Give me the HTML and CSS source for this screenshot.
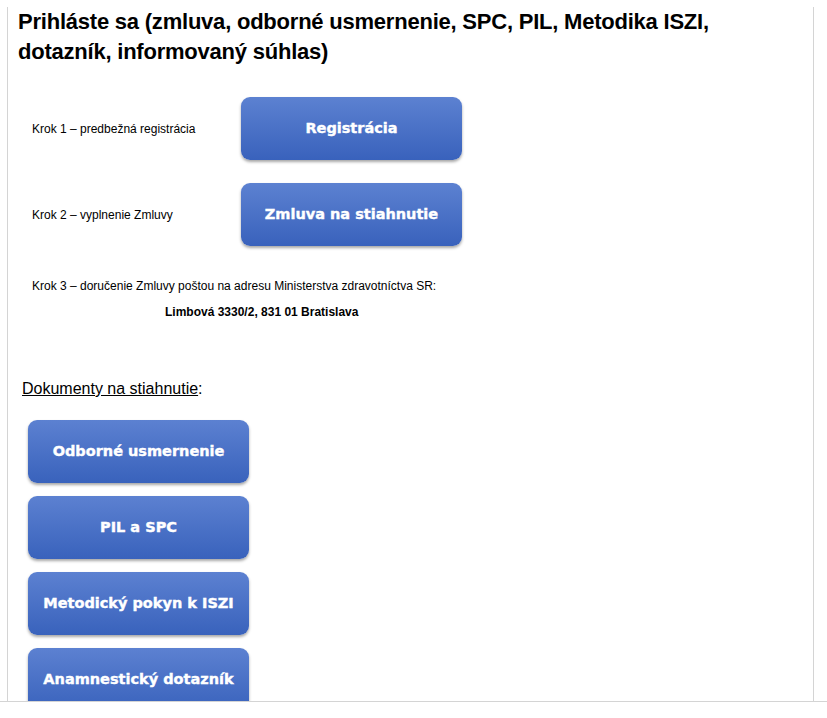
FILE: index.html
```html
<!DOCTYPE html>
<html lang="sk">

<head>
    <meta charset="UTF-8">
    <title>Prihláste sa</title>
    <link rel="stylesheet" href="styles.css">
</head>

<body>

    <div class="frame">
        <div class="panel">

            <h1 class="title">Prihláste sa (zmluva, odborné usmernenie, SPC, PIL, Metodika ISZI, dotazník, informovaný súhlas)</h1>

            <!-- kroky -->
            <div class="steps">
                <div class="step">
                    <span class="step-label">Krok 1 – predbežná registrácia</span>
                    <a class="blue-btn" href="#">Registrácia</a>
                </div>
                <div class="step">
                    <span class="step-label">Krok 2 – vyplnenie Zmluvy</span>
                    <a class="blue-btn" href="#">Zmluva na stiahnutie</a>
                </div>
            </div>

            <p class="step-text">Krok 3 – doručenie Zmluvy poštou na adresu Ministerstva zdravotníctva SR:</p>
            <p class="address">Limbová 3330/2, 831 01 Bratislava</p>

            <!-- dokumenty -->
            <p class="docs-title"><u>Dokumenty na stiahnutie</u>:</p>
            <div class="docs">
                <a class="blue-btn" href="#">Odborné usmernenie</a>
                <a class="blue-btn" href="#">PIL a SPC</a>
                <a class="blue-btn" href="#">Metodický pokyn k ISZI</a>
                <a class="blue-btn" href="#">Anamnestický dotazník</a>
            </div>

        </div>
    </div>

</body>

</html>
```

FILE: styles.css
```css
body {
    margin: 0;
    font-family: "Liberation Sans", Arial, sans-serif;
    color: #000;
    background: #fff;
}

.frame {
    height: 701px;
    border-bottom: 1px solid #d4d4d4;
    overflow: hidden;
}

.panel {
    margin-left: 7px;
    width: 785px;
    height: 100%;
    padding: 0 10px;
    border-left: 1px solid #d4d4d4;
    border-right: 1px solid #d4d4d4;
}

.title {
    margin: 7px 0 0 0;
    font-size: 22px;
    line-height: 30px;
    font-weight: bold;
    letter-spacing: -0.22px;
}

.steps {
    display: flex;
    flex-direction: column;
    gap: 23px;
    margin-top: 30px;
    padding-left: 14px;
}

.step {
    display: flex;
    align-items: center;
}

.step-label {
    width: 209px;
    font-size: 12px;
}

.blue-btn {
    display: flex;
    align-items: center;
    justify-content: center;
    width: 221px;
    height: 63px;
    border-radius: 9px;
    background: linear-gradient(#5c81d1, #3962bc);
    box-shadow: 0 2px 3px rgba(0, 0, 0, 0.35);
    color: #fff;
    text-decoration: none;
    font-family: "DejaVu Sans", Verdana, sans-serif;
    font-size: 14.5px;
    font-weight: bold;
    -webkit-text-stroke: 0.4px #fff;
    padding-bottom: 2px;
    box-sizing: border-box;
}

.step-text {
    margin: 33px 0 0 14px;
    font-size: 12px;
}

.address {
    margin: 12px 0 0 147px;
    font-size: 12px;
    font-weight: bold;
}

.docs-title {
    margin: 61px 0 0 4px;
    font-size: 16px;
}

.docs {
    display: flex;
    flex-direction: column;
    gap: 13px;
    margin-top: 22px;
    padding-left: 10px;
}
```
